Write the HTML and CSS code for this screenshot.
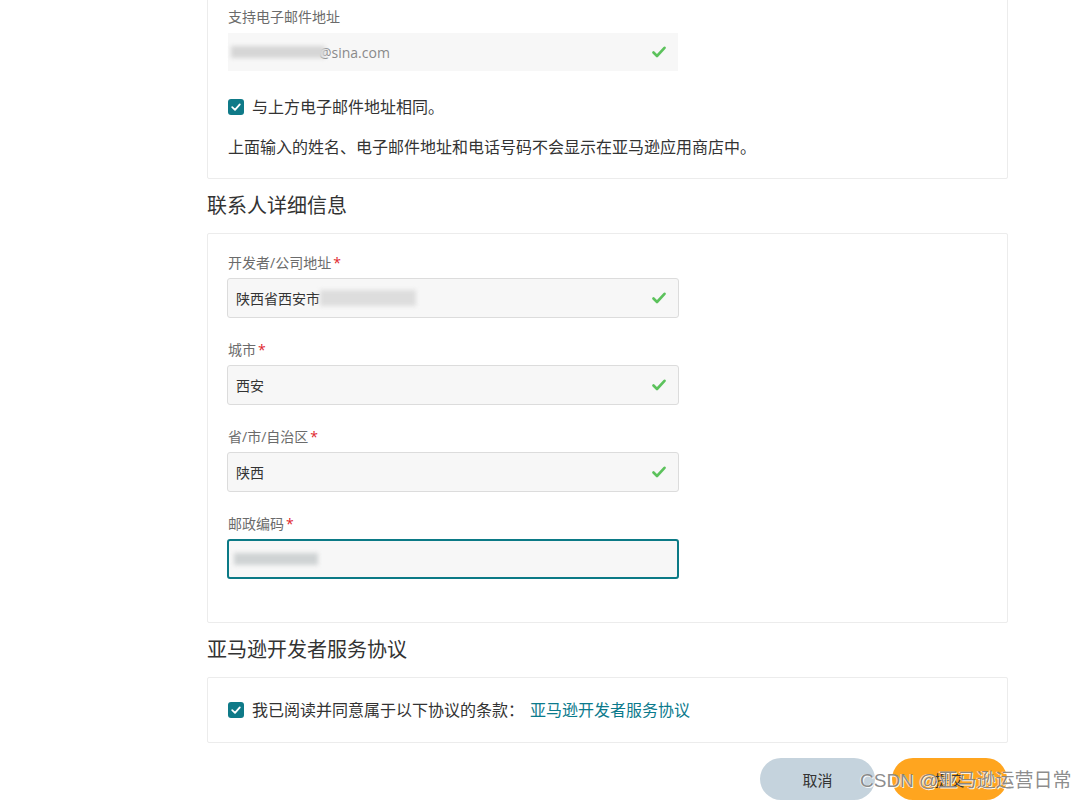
FILE: index.html
```html
<!DOCTYPE html>
<html lang="zh-CN">
<head>
<meta charset="utf-8">
<title>联系人详细信息</title>
<link rel="stylesheet" href="styles.css">
</head>
<body>
<div class="page">
  <div class="card card-top">
    <div class="label">支持电子邮件地址</div>
    <div class="input input-plain">
      <span class="value muted"><span class="blur blur-email"></span>@sina.com</span>
      <svg class="ok" viewBox="0 0 14 12" width="14" height="12"><path d="M1.5 6.5 L5 10 L12.5 1.8" fill="none" stroke="#5cc25c" stroke-width="2.6" stroke-linecap="round" stroke-linejoin="round"/></svg>
    </div>
    <label class="check-row">
      <span class="box"><svg viewBox="0 0 16 16" width="16" height="16"><path d="M4.2 8.2 L7 10.8 L11.8 5.4" fill="none" stroke="#fff" stroke-width="1.8" stroke-linecap="round" stroke-linejoin="round"/></svg></span>
      <span>与上方电子邮件地址相同。</span>
    </label>
    <p class="note">上面输入的姓名、电子邮件地址和电话号码不会显示在亚马逊应用商店中。</p>
  </div>

  <h2 class="section-title">联系人详细信息</h2>
  <div class="card card-form">
    <div class="field">
      <div class="label">开发者/公司地址<span class="req">*</span></div>
      <div class="input">
        <span class="value">陕西省西安市<span class="blur blur-addr"></span></span>
        <svg class="ok" viewBox="0 0 14 12" width="14" height="12"><path d="M1.5 6.5 L5 10 L12.5 1.8" fill="none" stroke="#5cc25c" stroke-width="2.6" stroke-linecap="round" stroke-linejoin="round"/></svg>
      </div>
    </div>
    <div class="field">
      <div class="label">城市<span class="req">*</span></div>
      <div class="input">
        <span class="value">西安</span>
        <svg class="ok" viewBox="0 0 14 12" width="14" height="12"><path d="M1.5 6.5 L5 10 L12.5 1.8" fill="none" stroke="#5cc25c" stroke-width="2.6" stroke-linecap="round" stroke-linejoin="round"/></svg>
      </div>
    </div>
    <div class="field">
      <div class="label">省/市/自治区<span class="req">*</span></div>
      <div class="input">
        <span class="value">陕西</span>
        <svg class="ok" viewBox="0 0 14 12" width="14" height="12"><path d="M1.5 6.5 L5 10 L12.5 1.8" fill="none" stroke="#5cc25c" stroke-width="2.6" stroke-linecap="round" stroke-linejoin="round"/></svg>
      </div>
    </div>
    <div class="field">
      <div class="label">邮政编码<span class="req">*</span></div>
      <div class="input input-focus">
        <span class="value"><span class="blur blur-zip"></span></span>
      </div>
    </div>
  </div>

  <h2 class="section-title">亚马逊开发者服务协议</h2>
  <div class="card card-agree">
    <label class="check-row">
      <span class="box"><svg viewBox="0 0 16 16" width="16" height="16"><path d="M4.2 8.2 L7 10.8 L11.8 5.4" fill="none" stroke="#fff" stroke-width="1.8" stroke-linecap="round" stroke-linejoin="round"/></svg></span>
      <span>我已阅读并同意属于以下协议的条款：</span>
      <a class="link" href="#">亚马逊开发者服务协议</a>
    </label>
  </div>

  <div class="actions">
    <button class="btn btn-cancel">取消</button>
    <button class="btn btn-submit">提交</button>
  </div>
</div>
<div class="watermark">CSDN @亚马逊运营日常</div>
</body>
</html>
```
FILE: styles.css
```css
html, body {
  margin: 0;
  padding: 0;
  background: #fff;
}
body {
  font-family: "Open Sans", "Noto Sans CJK SC", sans-serif;
  color: #333;
  overflow: hidden;
}
.page {
  width: 801px;
  margin-left: 207px;
}
.card {
  border: 1px solid #ececec;
  border-radius: 2px;
  background: #fff;
  padding: 0 20px;
  box-sizing: border-box;
}
.card-top {
  margin-top: -14px;
  padding-top: 22px;
  padding-bottom: 20px;
}
.label {
  font-size: 14px;
  line-height: 16px;
  color: #6b6b6b;
}
.req {
  color: #e0262d;
  margin-left: 2px;
}
.input {
  width: 452px;
  height: 40px;
  margin-top: 7px;
  box-sizing: border-box;
  background: #f7f7f7;
  border: 1px solid #dcdcdc;
  border-radius: 3px;
  display: flex;
  align-items: center;
  justify-content: space-between;
  padding: 0 12px 0 8px;
  margin-left: -1px;
}
.input-plain {
  margin-top: 8px;
  height: 38px;
  width: 450px;
  margin-left: 0;
  border-color: #f7f7f7;
  border-radius: 0;
  padding-right: 11px;
}
.input-focus {
  border: 2px solid #0b7a86;
  padding-left: 7px;
}
.value {
  font-size: 14px;
  color: #333;
  display: flex;
  align-items: center;
}
.muted {
  color: #8a8a8a;
  font-size: 14px;
}
.blur {
  display: inline-block;
  height: 12px;
  background: #d6d6d6;
  filter: blur(2px);
}
.blur-email {
  width: 94px;
  margin-right: -6px;
  margin-left: -6px;
}
.blur-addr {
  width: 96px;
  height: 16px;
  background: #dddddd;
}
.blur-zip {
  width: 84px;
  background: #cfd3d4;
  margin-left: -2px;
}
.ok {
  flex: none;
}
.check-row {
  display: flex;
  align-items: center;
  font-size: 16px;
  line-height: 22px;
  color: #333;
}
.card-top .check-row {
  margin-top: 25px;
}
.box {
  width: 16px;
  height: 16px;
  border-radius: 3px;
  background: #0f7a88;
  margin-right: 8px;
  flex: none;
  display: flex;
}
.note {
  margin: 18px 0 0;
  font-size: 16px;
  line-height: 22px;
  color: #333;
}
.section-title {
  font-size: 20px;
  font-weight: normal;
  line-height: 26px;
  margin: 14px 0 14px;
  color: #333;
}
.card-form {
  padding-top: 21px;
  padding-bottom: 43px;
}
.field + .field {
  margin-top: 24px;
}
.card-agree {
  padding-top: 21px;
  padding-bottom: 21px;
}
.link {
  color: #0b7a8c;
  text-decoration: none;
  margin-left: 6px;
}
.actions {
  display: flex;
  justify-content: flex-end;
  gap: 17px;
  margin-top: 15px;
  padding-right: 1px;
}
.btn {
  width: 115px;
  height: 42px;
  border: none;
  border-radius: 21px;
  font-family: "Open Sans", "Noto Sans CJK SC", sans-serif;
  font-size: 15px;
  color: #333;
}
.btn-cancel {
  background: #c5d3dd;
}
.btn-submit {
  background: #ffa51f;
}
.watermark {
  position: absolute;
  left: 860px;
  top: 768px;
  font-family: "Liberation Sans", "Noto Sans CJK SC", sans-serif;
  font-size: 19px;
  line-height: 26px;
  color: rgba(120, 120, 120, 0.85);
  text-shadow: 1px 1px 0 rgba(255,255,255,0.9), -1px 0 0 rgba(255,255,255,0.6);
  white-space: nowrap;
}
```
